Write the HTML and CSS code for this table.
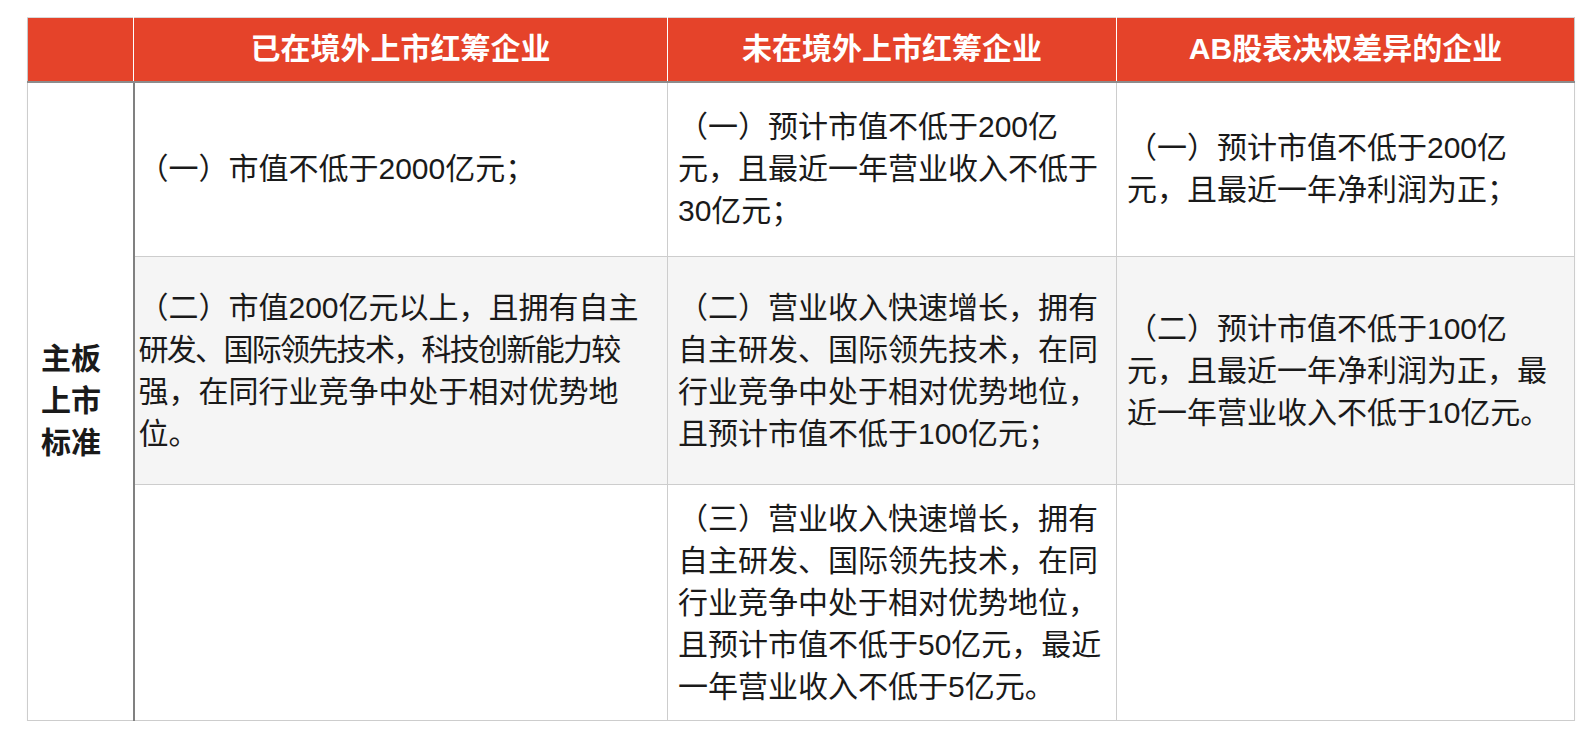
FILE: index.html
```html
<!DOCTYPE html>
<html lang="zh-CN">
<head>
<meta charset="utf-8">
<title>主板上市标准</title>
<link rel="stylesheet" href="styles.css">
</head>
<body>
<table class="std-table">
  <colgroup>
    <col class="c-label">
    <col class="c-a">
    <col class="c-b">
    <col class="c-c">
  </colgroup>
  <thead>
    <tr class="head-row">
      <th class="h-blank"></th>
      <th>已在境外上市红筹企业</th>
      <th>未在境外上市红筹企业</th>
      <th>AB股表决权差异的企业</th>
    </tr>
  </thead>
  <tbody>
    <tr class="row-1">
      <td class="label" rowspan="3">主板<br>上市<br>标准</td>
      <td class="col-a"><div class="txt txt-a">（一）市值不低于2000亿元；</div></td>
      <td class="col-b"><div class="txt txt-b">（一）预计市值不低于200亿<br>元，且最近一年营业收入不低于<br>30亿元；</div></td>
      <td class="col-c"><div class="txt txt-c">（一）预计市值不低于200亿<br>元，且最近一年净利润为正；</div></td>
    </tr>
    <tr class="row-2">
      <td class="col-a"><div class="txt txt-a">（二）市值200亿元以上，且拥有自主<br><span class="tight">研发、国际领先技术，科技创新能力较</span><br>强，在同行业竞争中处于相对优势地<br>位。</div></td>
      <td class="col-b"><div class="txt txt-b">（二）营业收入快速增长，拥有<br>自主研发、国际领先技术，在同<br>行业竞争中处于相对优势地位，<br>且预计市值不低于100亿元；</div></td>
      <td class="col-c"><div class="txt txt-c">（二）预计市值不低于100亿<br>元，且最近一年净利润为正，最<br>近一年营业收入不低于10亿元。</div></td>
    </tr>
    <tr class="row-3">
      <td class="col-a"></td>
      <td class="col-b"><div class="txt txt-b">（三）营业收入快速增长，拥有<br>自主研发、国际领先技术，在同<br>行业竞争中处于相对优势地位，<br>且预计市值不低于50亿元，最近<br>一年营业收入不低于5亿元。</div></td>
      <td class="col-c"></td>
    </tr>
  </tbody>
</table>
</body>
</html>
```
FILE: styles.css
```css
html, body {
  margin: 0;
  padding: 0;
  background: #ffffff;
}

body {
  padding: 17px 0 0 27px;
  font-family: "Liberation Sans", "Noto Sans CJK SC", sans-serif;
  color: #1a1a1a;
}

.std-table {
  border-collapse: collapse;
  table-layout: fixed;
  width: 1547px;
  box-shadow: 0 3px 3px rgba(0, 0, 0, 0.03);
}

.c-label { width: 106px; }
.c-a { width: 534px; }
.c-b { width: 449px; }
.c-c { width: 458px; }

.head-row {
  height: 64px;
}

.head-row th {
  background: #e5432a;
  color: #ffffff;
  font-size: 30px;
  font-weight: 700;
  line-height: 40px;
  text-align: center;
  vertical-align: middle;
  padding: 0;
  border-left: 1px solid #ffffff;
  border-right: 1px solid #ffffff;
  border-top: 1px solid #d9d9d9;
  border-bottom: 2px solid #8c8c8c;
}

.head-row th.h-blank {
  border-left: 1px solid #c8c8c8;
}

.head-row th:last-child {
  border-right: 1px solid #c8c8c8;
}

.std-table td {
  border: 1px solid #cdcdcd;
  font-size: 30px;
  line-height: 42px;
  vertical-align: middle;
  padding: 0;
}

.row-1 { height: 175px; }
.row-2 { height: 228px; }
.row-3 { height: 236px; }

.row-2 td {
  background: #f5f5f5;
}

.std-table td.label {
  background: #ffffff;
  border-right: 2px solid #808080;
  font-weight: 700;
  padding: 0 20px 0 13px;
  line-height: 42px;
}

.txt {
  text-align: left;
  white-space: nowrap;
}

.txt-a {
  padding-left: 4px;
}

.txt-b {
  padding-left: 10px;
}

.txt-c {
  padding-left: 10px;
}

.tight {
  letter-spacing: -1.7px;
}
```
